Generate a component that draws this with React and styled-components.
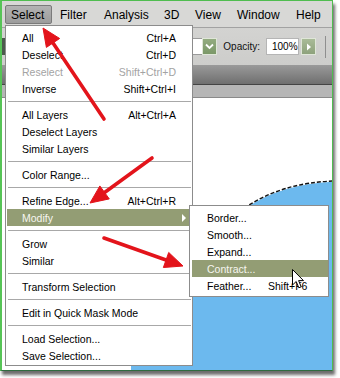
import React from "react";
import styled, { createGlobalStyle } from "styled-components";

const menuBarItems = [
  { label: "Select", w: 47, active: true },
  { label: "Filter", w: 42 },
  { label: "Analysis", w: 58 },
  { label: "3D", w: 29 },
  { label: "View", w: 40 },
  { label: "Window", w: 57 },
  { label: "Help", w: 38 },
];

// groups of the Select menu, a separator goes between each group
const selectMenu = [
  [
    { label: "All", key: "Ctrl+A" },
    { label: "Deselect", key: "Ctrl+D" },
    { label: "Reselect", key: "Shift+Ctrl+D", disabled: true },
    { label: "Inverse", key: "Shift+Ctrl+I" },
  ],
  [
    { label: "All Layers", key: "Alt+Ctrl+A" },
    { label: "Deselect Layers" },
    { label: "Similar Layers" },
  ],
  [{ label: "Color Range..." }],
  [
    { label: "Refine Edge...", key: "Alt+Ctrl+R" },
    { label: "Modify", active: true, sub: true },
  ],
  [{ label: "Grow" }, { label: "Similar" }],
  [{ label: "Transform Selection" }],
  [{ label: "Edit in Quick Mask Mode" }],
  [{ label: "Load Selection..." }, { label: "Save Selection..." }],
];

const modifyMenu = [
  { label: "Border..." },
  { label: "Smooth..." },
  { label: "Expand..." },
  { label: "Contract...", active: true },
  { label: "Feather...", key: "Shift+F6" },
];

const arrows = [
  { from: [104, 119], to: [43, 28] },
  { from: [152, 158], to: [90, 203] },
  { from: [104, 238], to: [183, 266] },
];

const headPoints = (from, to, len = 18, half = 8) => {
  const dx = to[0] - from[0];
  const dy = to[1] - from[1];
  const l = Math.hypot(dx, dy);
  const ux = dx / l;
  const uy = dy / l;
  const bx = to[0] - ux * len;
  const by = to[1] - uy * len;
  return {
    base: [bx, by],
    points: `${to[0]},${to[1]} ${bx - uy * half},${by + ux * half} ${bx + uy * half},${by - ux * half}`,
  };
};

const App = () => {
  return (
    <Page>
      <GlobalStyle />
      <Frame>
        <MenuBar>
          {menuBarItems.map((m) => (
            <MenuTitle key={m.label} $w={m.w} $active={m.active}>
              {m.label}
            </MenuTitle>
          ))}
        </MenuBar>

        <OptionsBar>
          <ToolIcon />
          <Field />
          <GreenButton>
            <svg width="9" height="7" viewBox="0 0 9 7">
              <path d="M1 1.5 L4.5 5 L8 1.5" fill="none" stroke="#fff" strokeWidth="1.8" />
            </svg>
          </GreenButton>
          <OptionLabel>Opacity:</OptionLabel>
          <OptionInput>100%</OptionInput>
          <GreenButton $light>
            <svg width="6" height="8" viewBox="0 0 6 8">
              <path d="M1 0.5 L5 4 L1 7.5 Z" fill="#fff" />
            </svg>
          </GreenButton>
          <Divider />
        </OptionsBar>

        <TabBar />
        <Ruler />

        <Canvas>
          <svg width="100%" height="100%" viewBox="2 98 330 272" preserveAspectRatio="none">
            <path
              d="M333 181 Q 282 183 246 207 L 131 330 L 131 372 L 334 372 Z"
              fill="#6cb9ee"
            />
            <path d="M333 181 Q 282 183 246 207" fill="none" stroke="#fff" strokeWidth="1.4" />
            <path
              d="M333 181 Q 282 183 246 207"
              fill="none"
              stroke="#111"
              strokeWidth="1.4"
              strokeDasharray="4 2"
            />
          </svg>
        </Canvas>
      </Frame>

      <DropMenu>
        {selectMenu.map((group, gi) => (
          <React.Fragment key={gi}>
            {gi > 0 && <Separator />}
            {group.map((item) => (
              <MenuRow key={item.label} $active={item.active} $disabled={item.disabled}>
                <span>{item.label}</span>
                {item.key && <span>{item.key}</span>}
                {item.sub && <Caret />}
              </MenuRow>
            ))}
          </React.Fragment>
        ))}
      </DropMenu>

      <SubMenu>
        {modifyMenu.map((item) => (
          <SubRow key={item.label} $active={item.active}>
            <SubLabel>{item.label}</SubLabel>
            {item.key && <span>{item.key}</span>}
          </SubRow>
        ))}
      </SubMenu>

      <Pointer width="13" height="21" viewBox="0 0 13 21">
        <path
          d="M0.5 0.5 L0.5 16 L4.2 12.5 L6.8 18.8 L9.2 17.8 L6.6 11.6 L11.5 11.6 Z"
          fill="#fff"
          stroke="#000"
          strokeWidth="1"
          strokeLinejoin="miter"
        />
      </Pointer>

      <Overlay width="340" height="378" viewBox="0 0 340 378">
        {arrows.map((a, i) => {
          const h = headPoints(a.from, a.to);
          return (
            <g key={i} fill="#e3141b" stroke="#e3141b">
              <line
                x1={a.from[0]}
                y1={a.from[1]}
                x2={h.base[0]}
                y2={h.base[1]}
                strokeWidth="3.6"
                strokeLinecap="round"
              />
              <polygon points={h.points} strokeWidth="1" strokeLinejoin="round" />
            </g>
          );
        })}
      </Overlay>
    </Page>
  );
};

export default App;

const GlobalStyle = createGlobalStyle`
  html, body {
    margin: 0;
    padding: 0;
    background: #fff;
  }
  body {
    font-family: "Liberation Sans", Arial, sans-serif;
  }
`;

const Page = styled.div`
  position: relative;
  width: 340px;
  height: 378px;
  overflow: hidden;
  background: #fff;
`;

const Frame = styled.div`
  width: 330px;
  height: 369px;
  border: 1px solid #4fbd4f;
  border-left: 2px solid #57c457;
  border-bottom-color: #2f6b3f;
  box-shadow: 2px 4px 3px rgba(30, 30, 30, 0.65);
  display: flex;
  flex-direction: column;
  background: #d6d6d4;
  overflow: hidden;
`;

const MenuBar = styled.div`
  height: 26px;
  flex: none;
  display: flex;
  align-items: center;
  gap: 2px;
  padding-left: 3px;
  background: #d8d8d6;
`;

const MenuTitle = styled.div`
  box-sizing: border-box;
  width: ${(p) => p.$w}px;
  height: 19px;
  padding-left: 5px;
  font-size: 12px;
  line-height: 18px;
  color: #000;
  border: 1px solid ${(p) => (p.$active ? "#7a7a7a" : "transparent")};
  border-radius: 2px;
  background: ${(p) => (p.$active ? "linear-gradient(#b3b3b3, #9c9c9c)" : "transparent")};
`;

const OptionsBar = styled.div`
  box-sizing: border-box;
  height: 38px;
  flex: none;
  display: flex;
  align-items: center;
  padding-right: 6px;
  border-top: 1px solid #a2a2a2;
  background: linear-gradient(#d3d3d1, #cdcdcb);
  font-size: 10px;
`;

const ToolIcon = styled.div`
  width: 4px;
  height: 17px;
  background: #4d5a4d;
`;

const Field = styled.div`
  flex: 1;
  height: 15px;
  margin-left: 30px;
  background: #fff;
  border: 1px solid #9a9a9a;
  border-right: none;
`;

const GreenButton = styled.div`
  box-sizing: border-box;
  width: 15px;
  height: 17px;
  margin-left: ${(p) => (p.$light ? "2px" : "0")};
  display: flex;
  align-items: center;
  justify-content: center;
  border: 1px solid #dfe6d8;
  background: ${(p) =>
    p.$light ? "linear-gradient(#a9bb98, #8ea27c)" : "linear-gradient(#93ab80, #7b9868)"};
`;

const OptionLabel = styled.span`
  margin-left: 6px;
  color: #111;
`;

const OptionInput = styled.div`
  box-sizing: border-box;
  width: 33px;
  height: 17px;
  margin-left: 6px;
  padding-left: 5px;
  line-height: 16px;
  background: #fff;
  border: 1px solid #b5b5b5;
`;

const Divider = styled.div`
  width: 1px;
  height: 22px;
  margin-left: 9px;
  background: #8f8f8f;
`;

const TabBar = styled.div`
  box-sizing: border-box;
  height: 20px;
  flex: none;
  background: linear-gradient(#9a9a9a, #6f6f6f);
  border-bottom: 1px solid #444;
`;

const Ruler = styled.div`
  box-sizing: border-box;
  height: 13px;
  flex: none;
  background: #b6b6b6;
  border-bottom: 1px solid #8a8a8a;
`;

const Canvas = styled.div`
  flex: 1;
  position: relative;
  background: #fff;

  svg {
    position: absolute;
    inset: 0;
    display: block;
  }
`;

const DropMenu = styled.div`
  position: absolute;
  left: 5px;
  top: 25px;
  box-sizing: border-box;
  width: 188px;
  padding: 3px 0 1px;
  background: #fff;
  border: 1px solid #8c8c8c;
  font-size: 10.5px;
`;

const MenuRow = styled.div`
  position: relative;
  height: 17px;
  margin: 0 3px 0 1px;
  padding: 0 13px 0 15px;
  display: flex;
  align-items: center;
  justify-content: space-between;
  white-space: nowrap;
  color: ${(p) => (p.$disabled ? "#a3a3a3" : p.$active ? "#f6f6f0" : "#000")};
  background: ${(p) => (p.$active ? "#939d74" : "transparent")};
`;

const Caret = styled.span`
  width: 0;
  height: 0;
  margin-right: -10px;
  border-left: 4px solid #fff;
  border-top: 4px solid transparent;
  border-bottom: 4px solid transparent;
`;

const Separator = styled.div`
  height: 1px;
  margin: 4px 1px 4px 2px;
  background: #a8a8a8;
`;

const SubMenu = styled.div`
  position: absolute;
  left: 189px;
  top: 205px;
  box-sizing: border-box;
  width: 140px;
  padding: 3px 0 2px;
  background: #fff;
  border: 1px solid #8c8c8c;
  font-size: 10.5px;
`;

const SubRow = styled.div`
  height: 17px;
  margin-left: 2px;
  padding-left: 15px;
  display: flex;
  align-items: center;
  white-space: nowrap;
  color: ${(p) => (p.$active ? "#f6f6f0" : "#000")};
  background: ${(p) => (p.$active ? "#939d74" : "transparent")};
`;

const SubLabel = styled.span`
  min-width: 61px;
`;

const Pointer = styled.svg`
  position: absolute;
  left: 292px;
  top: 269px;
`;

const Overlay = styled.svg`
  position: absolute;
  inset: 0;
  pointer-events: none;
`;
